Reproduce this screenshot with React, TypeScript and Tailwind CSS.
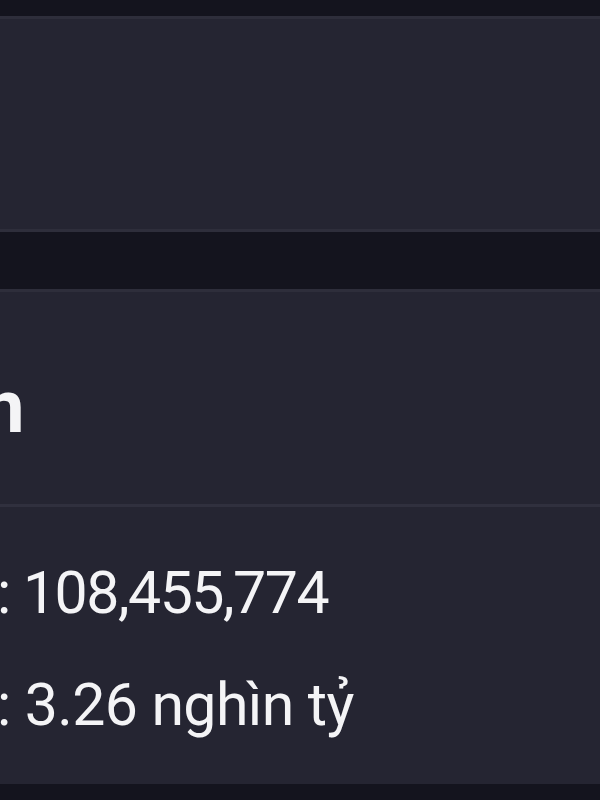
import React from "react";

const stats = [
  { label: ": 108,455,774", tracking: "tracking-[-1.5px]" },
  { label: ": 3.26 nghìn tỷ", tracking: "tracking-[-0.6px]" },
];

const App = () => {
  return (
    <div className="w-[600px] h-[800px] overflow-hidden bg-[#14141e] pt-[16px] font-['Roboto',sans-serif] text-[#f4f4f6]">
      <div className="h-[216px] bg-[#252532] border-y-[3px] border-[#2e2e3b]"></div>

      <div className="h-[57px]"></div>

      <div className="h-[495px] bg-[#252532] border-t-[3px] border-[#2e2e3b] overflow-hidden">
        <div className="h-[212px] pt-[78px] overflow-hidden">
          <div className="-ml-[17px] text-[74px] font-bold leading-none whitespace-nowrap">n</div>
        </div>
        <div className="h-[3px] bg-[#30303e]"></div>
        <div className="pt-[30px] overflow-hidden">
          {stats.map((s) => (
            <div
              key={s.label}
              className={`-ml-[3px] text-[59px] leading-[112px] whitespace-nowrap ${s.tracking}`}
            >
              {s.label}
            </div>
          ))}
        </div>
      </div>
    </div>
  );
};

export default App;
